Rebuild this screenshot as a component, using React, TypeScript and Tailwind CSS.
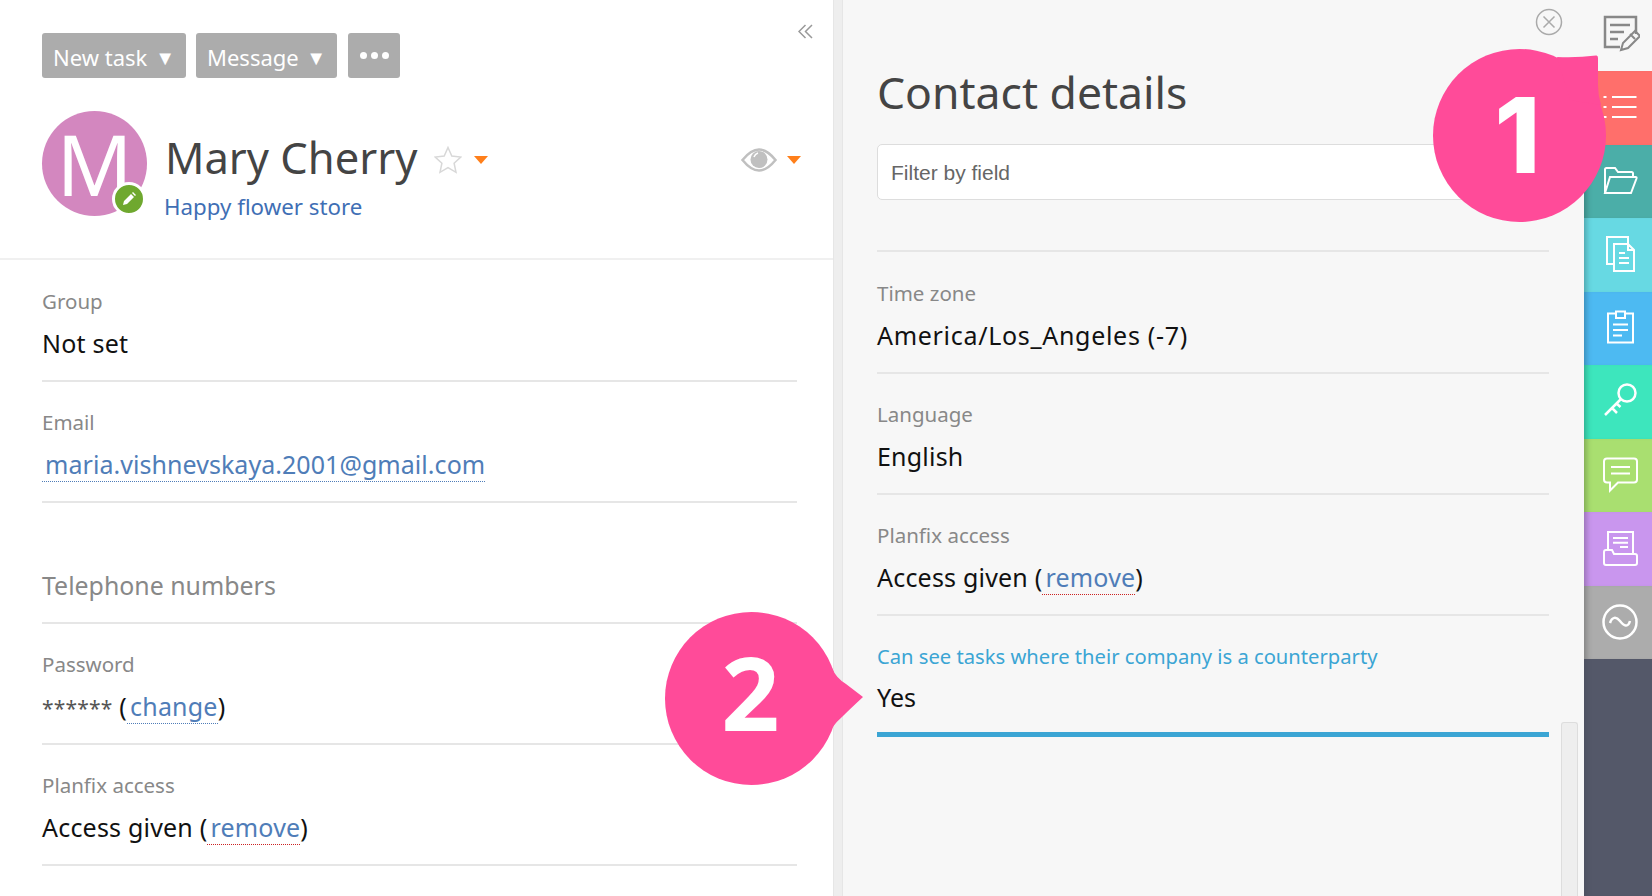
const PINK = "#ff4b99";

const Caret = () => <span className="inline-block w-0 h-0 border-l-[7px] border-r-[7px] border-t-[8px] border-l-transparent border-r-transparent border-t-[#ff7f1a]" />;

const Field = ({ label, children, labelClass = "text-[#888]" }: { label?: string; children: React.ReactNode; labelClass?: string }) => (
  <div className="h-[121px] border-b-2 border-[#e6e6e6] pt-[26px]">
    <div className={`h-[28px] text-[20.5px] leading-[28px] ${labelClass}`}>{label}</div>
    <div className="mt-[14px] h-[29px] text-[25px] leading-[29px] tracking-[0.2px] text-[#111]">{children}</div>
  </div>
);

const Remove = () => (
  <>Access given (<a className="border-b border-dotted border-[#c22] pl-[3px] text-[#4f7db8]">remove</a>)</>
);

const icons = {
  list: <path d="M3.500 9h3M3.500 19h3M3.500 29h3M12 9h24.500M12 19h24.500M12 29h24.500" />,
  folder: <path d="M5 32V8.500Q5 7 6.500 7H15l3 4h13.500q1.500 0 1.500 1.500V16M10 16h25.500q1.500 0 1 1.500L31 32H5z" />,
  docs: (
    <>
      <path d="M14 29H7V2h21v7" />
      <path d="M14 9h14l6 6v21H14zM28 9v6h6M19 18h6M19 23h10M19 28h10" />
    </>
  ),
  clip: <path d="M16 5.500H8v29h25v-29h-8M16 3.500h9V10h-9zM13 16.500h15M13 22h15M13 27.500h9" />,
  key: (
    <>
      <circle cx="27" cy="11" r="8.500" strokeWidth="2.500" />
      <path d="M21 17 5 33M12 26l5 5M16.500 21.500l4 3.500" strokeWidth="2.500" />
    </>
  ),
  chat: <path d="M7 3.500h27q3 0 3 3v18q0 3-3 3H18l-8 8v-8H7q-3 0-3-3v-18q0-3 3-3zM11 12h19M11 18.500h19" />,
  tray: <path d="M8 21V3h25v22M4 23q0-2 2-2h6l2 4h21q2 0 2 2v7q0 2-2 2H6q-2 0-2-2zM13 9h15M13 13.700h15M20 18h8" />,
  wave: (
    <>
      <circle cx="20" cy="20" r="16.500" strokeWidth="2.500" />
      <path d="M10 21C12 15 16 14 20 19S28 26 30 19" strokeWidth="2.500" />
    </>
  ),
};

const rows = [
  { bg: "bg-[#ff6f6b]", icon: icons.list },
  { bg: "bg-[#4baea8]", icon: icons.folder },
  { bg: "bg-[#67d9e3]", icon: icons.docs },
  { bg: "bg-[#4dbaf2]", icon: icons.clip },
  { bg: "bg-[#3de6bd]", icon: icons.key },
  { bg: "bg-[#a9df70]", icon: icons.chat },
  { bg: "bg-[#c996ee]", icon: icons.tray },
  { bg: "bg-[#acacac]", icon: icons.wave },
];

export default function App() {
  return (
    <div className="relative flex h-[896px] w-[1652px] overflow-hidden bg-white font-['Noto_Sans',sans-serif]">
      {/* left panel */}
      <div className="relative w-[833px] shrink-0">
        <div className="h-[260px] border-b-2 border-[#f0f0f0] px-[42px] pt-[33px]">
          <div className="flex text-[22px] text-white">
            <button className="flex h-[45px] w-[144px] items-center justify-between rounded-[3px] bg-[#acacac] pl-[11px] pr-[11px] pt-[4px]">
              New task <span className="text-[20px]">▼</span>
            </button>
            <button className="ml-[10px] flex h-[45px] w-[141px] items-center justify-between rounded-[3px] bg-[#acacac] pl-[11px] pr-[11px] pt-[4px]">
              Message <span className="text-[20px]">▼</span>
            </button>
            <button className="ml-[11px] flex h-[45px] w-[52px] items-center justify-center gap-[4px] rounded-[3px] bg-[#acacac]">
              <span className="h-[7px] w-[7px] rounded-full bg-white" />
              <span className="h-[7px] w-[7px] rounded-full bg-white" />
              <span className="h-[7px] w-[7px] rounded-full bg-white" />
            </button>
          </div>
          <div className="mt-[33px] flex">
            <div className="relative flex h-[105px] w-[105px] shrink-0 items-center justify-center rounded-full bg-[#d387bf] text-[84px] leading-none font-normal text-white">
              M
              <span className="absolute left-[70px] top-[71px] flex h-[34px] w-[34px] items-center justify-center rounded-full border-[3px] border-white bg-[#6fa82f]">
                <svg width="18" height="18" viewBox="0 0 18 18" fill="white"><path d="M3 15l1-4 7-7 3 3-7 7zM12 3l1-1 3 3-1 1z" /></svg>
              </span>
            </div>
            <div className="ml-[18px] flex-1">
              <div className="mt-[22px] flex h-[50px] items-center text-[43.5px] leading-none text-[#444]">
                Mary Cherry
                <svg className="ml-[17px] mt-[3px]" width="28" height="28" viewBox="0 0 28 28" fill="none" stroke="#d8d8d8" strokeWidth="1.500"><path d="M14 1.500l3.800 8.500 9 1-6.700 6.200 1.900 9.100L14 21.700 6 26.300l1.900-9.100L1.200 11l9-1z" /></svg>
                <span className="ml-[12px] mt-[3px] flex"><Caret /></span>
                <svg className="ml-auto mt-[3px]" width="36" height="24" viewBox="0 0 36 24">
                  <path d="M1.500 12Q10 1.500 18 1.500T34.500 12Q26 22.500 18 22.500T1.500 12z" fill="none" stroke="#c0c0c0" strokeWidth="2.500" />
                  <circle cx="18" cy="11.500" r="8.500" fill="#c0c0c0" />
                  <path d="M13 9q1-3 4-4" stroke="white" strokeWidth="1.500" fill="none" />
                </svg>
                <span className="ml-[10px] mr-[-10px] mt-[3px] flex"><Caret /></span>
              </div>
              <div className="ml-[-1px] mt-[10px] text-[22.3px] leading-[28px] text-[#3f6fb5]">Happy flower store</div>
            </div>
          </div>
        </div>
        <svg className="absolute left-[798px] top-[24px]" width="15" height="15" viewBox="0 0 15 15" fill="none" stroke="#999" strokeWidth="1.500">
          <path d="M7.500 1 1 7.500 7.500 14M14 1 7.500 7.500 14 14" />
        </svg>
        <div className="pl-[42px] pr-[36px] pt-[1px]">
          <Field label="Group">Not set</Field>
          <Field label="Email">
            <a className="border-b border-dotted border-[#4f7db8] pl-[3px] text-[25px] tracking-[0.05px] text-[#4f7db8]">maria.vishnevskaya.2001@gmail.com</a>
          </Field>
          <Field>
            <span className="text-[24.9px] tracking-normal text-[#888]">Telephone numbers</span>
          </Field>
          <Field label="Password">
            <span className="text-[21px] text-[#555]">******</span> (<a className="border-b border-dotted border-[#4f7db8] pl-[3px] text-[#4f7db8]">change</a>)
          </Field>
          <Field label="Planfix access"><Remove /></Field>
        </div>
      </div>

      {/* splitter */}
      <div className="w-[10px] shrink-0 border-x border-[#e6e6e6] bg-[#eee]" />

      {/* right panel */}
      <div className="relative flex-1 bg-[#f7f7f7] pl-[34px] pr-[35px]">
        <h1 className="pt-[63px] text-[44.5px] leading-[58px] text-[#444]">Contact details</h1>
        <input
          placeholder="Filter by field"
          className="mt-[23px] h-[56px] w-full rounded-[5px] border border-[#ddd] bg-white px-[13px] pt-[2px] font-['Liberation_Sans',sans-serif] text-[21px] placeholder:text-[#666]"
        />
        <div className="mt-[50px] border-t-2 border-[#e6e6e6] pt-[1px]">
          <Field label="Time zone"><span className="tracking-[0.7px]">America/Los_Angeles (-7)</span></Field>
          <Field label="Language">English</Field>
          <Field label="Planfix access"><Remove /></Field>
          <div className="h-[121px] border-b-[5px] border-[#3ba5d4] pt-[26px]">
            <div className="h-[28px] text-[20.2px] leading-[28px] text-[#3ba5d4]">Can see tasks where their company is a counterparty</div>
            <div className="mt-[13px] h-[29px] text-[25px] leading-[29px] text-[#111]">Yes</div>
          </div>
        </div>
        <div className="absolute bottom-0 left-[718px] top-[722px] w-[17px] rounded-t-[3px] border border-b-0 border-[#ddd] bg-[#eee]" />
      </div>

      {/* right sidebar */}
      <div className="flex w-[68px] shrink-0 flex-col bg-[#f7f7f7]">
        <div className="flex h-[71px] items-start justify-center pl-1 pt-[15px]">
          <svg width="40" height="40" viewBox="0 0 40 40" fill="none" stroke="#888" strokeWidth="2.500">
            <path d="M20 32H5V2h31v17M10 10h20M10 17h14M10 24h8" />
            <path d="M21 35l2-7 12-12 5 5-12 12zM30 19l5 5" strokeWidth="2" />
          </svg>
        </div>
        {rows.map((row, i) => (
          <div key={i} className={`flex h-[73.5px] items-center justify-center pl-1 ${row.bg} shadow-[inset_7px_0_6px_-5px_rgba(0,0,0,0.28)]`}>
            <svg width="40" height="40" viewBox="0 0 40 40" fill="none" stroke="white" strokeWidth="2">
              {row.icon}
            </svg>
          </div>
        ))}
        <div className="flex-1 bg-[#545869] shadow-[inset_7px_0_6px_-5px_rgba(0,0,0,0.1)]" />
      </div>

      {/* close */}
      <svg className="absolute left-[1535px] top-[8px]" width="28" height="28" viewBox="0 0 28 28" fill="none" stroke="#aaa" strokeWidth="1.500">
        <circle cx="14" cy="14" r="12.500" />
        <path d="M8.500 8.500l11 11M19.500 8.500l-11 11" />
      </svg>

      {/* callouts */}
      <div className="absolute left-[1420px] top-[40px] h-[200px] w-[200px]">
        <svg width="200" height="200" viewBox="0 0 200 200" fill={PINK}>
          <circle cx="99.500" cy="95.500" r="86.500" />
          <path d="M137 17Q157 18 176 15.500Q178 15 178 18L178 45Q178 55 181 65L150 60Z" />
        </svg>
        <span className="absolute left-0 top-[30px] w-[195px] text-center font-['Inter',sans-serif] text-[104px] leading-[130px] font-extrabold text-white">1</span>
      </div>
      <div className="absolute left-[660px] top-[605px] h-[190px] w-[210px]">
        <svg width="210" height="190" viewBox="0 0 210 190" fill={PINK}>
          <circle cx="91.500" cy="93.500" r="86.500" />
          <path d="M172 63Q176 73 186 79L203 92Q190 104 183 111Q176 117 172 123Z" />
        </svg>
        <span className="absolute left-0 top-[22px] w-[181px] text-center text-[102px] leading-[130px] font-bold text-white">2</span>
      </div>
    </div>
  );
}
